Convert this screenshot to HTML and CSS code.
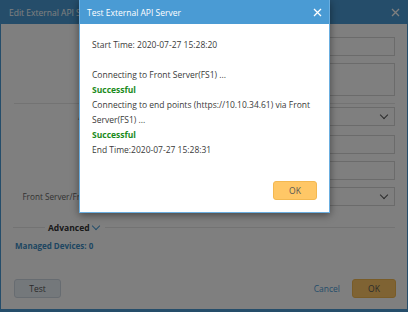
FILE: index.html
```
<!DOCTYPE html>
<html lang="en">
<head>
    <meta charset="UTF-8">
    <title>Test External API Server</title>
    <link rel="stylesheet" href="styles.css">
</head>
<body>
    <div class="dialog">
        <div class="dialog-header">
            <span class="dialog-title">Edit External API Server</span>
            <svg class="close" width="9" height="9" viewBox="0 0 9 9"><path d="M1 1L8 8M8 1L1 8" stroke="#fff" stroke-width="1.3"/></svg>
        </div>
        <div class="dialog-body">
            <div class="row">
                <label class="label">Name:</label>
                <div class="field"></div>
            </div>
            <div class="row row-tall">
                <label class="label">Description:</label>
                <div class="field field-area"></div>
            </div>
            <div class="separator"></div>
            <div class="row row-first">
                <label class="label">Authentication By:</label>
                <div class="field select"><span class="chev"></span></div>
            </div>
            <div class="row">
                <label class="label">Username:</label>
                <div class="field"></div>
            </div>
            <div class="row">
                <label class="label">Password:</label>
                <div class="field"></div>
            </div>
            <div class="row">
                <label class="label">Front Server/Front Server Group:</label>
                <div class="field select"><span class="chev"></span></div>
            </div>
            <div class="advanced">
                <span class="adv-line"></span>
                <span class="adv-text">Advanced</span>
                <span class="chev chev-blue"></span>
                <span class="adv-line adv-line-long"></span>
            </div>
            <div class="managed">Managed Devices: 0</div>
        </div>
        <div class="dialog-footer">
            <button class="btn btn-test">Test</button>
            <span class="spacer"></span>
            <a class="cancel">Cancel</a>
            <button class="btn btn-ok">OK</button>
        </div>
    </div>

    <div class="overlay"></div>

    <div class="modal">
        <div class="modal-header">
            <span class="modal-title">Test External API Server</span>
            <svg class="close" width="9" height="9" viewBox="0 0 9 9"><path d="M1 1L8 8M8 1L1 8" stroke="#fff" stroke-width="1.3"/></svg>
        </div>
        <div class="modal-body">
            <div class="line">Start Time: 2020-07-27 15:28:20</div>
            <div class="line">&nbsp;</div>
            <div class="line">Connecting to Front Server(FS1) ...</div>
            <div class="line ok-text">Successful</div>
            <div class="line">Connecting to end points (https://10.10.34.61) via Front Server(FS1) ...</div>
            <div class="line ok-text">Successful</div>
            <div class="line">End Time:2020-07-27 15:28:31</div>
        </div>
        <div class="modal-footer">
            <button class="btn btn-ok">OK</button>
        </div>
    </div>
</body>
</html>
```

FILE: styles.css
```
html, body {
    margin: 0;
    padding: 0;
}
body {
    width: 408px;
    height: 312px;
    overflow: hidden;
    position: relative;
    font-family: "Open Sans", Arial, sans-serif;
    font-size: 8px;
    color: #333;
    background: #fff;
}
.dialog {
    height: 312px;
    box-sizing: border-box;
    border: 1px solid #4a9bd4;
    border-top: none;
    border-bottom-width: 3px;
    display: flex;
    flex-direction: column;
    background: #fff;
}
.dialog-header {
    height: 24px;
    background: #4a9bd4;
    color: #fff;
    display: flex;
    align-items: center;
    justify-content: space-between;
    padding: 0 7px 0 8px;
    font-size: 8.5px;
}
.close {
    display: block;
}
.dialog-body {
    padding: 13px 12px 0 12px;
}
.row {
    display: flex;
    align-items: center;
    height: 19px;
    margin-bottom: 7px;
}
.row-tall {
    height: 33px;
    margin-bottom: 0;
}
.row-first {
    margin-bottom: 9px;
}
.label {
    width: 135px;
    flex: none;
    text-align: right;
    padding-right: 8px;
    white-space: nowrap;
    font-size: 8.2px;
    color: #666;
}
.field {
    flex: 1;
    height: 100%;
    box-sizing: border-box;
    border: 1px solid #d6d6d6;
    background: #fff;
    display: flex;
    align-items: center;
    justify-content: flex-end;
    padding-right: 7px;
}
.separator {
    height: 1px;
    background: #e6e6e6;
    margin: 7px 0 3px 1px;
}
.chev {
    width: 5px;
    height: 5px;
    border-right: 1px solid #555;
    border-bottom: 1px solid #555;
    transform: rotate(45deg);
    margin-top: -3px;
}
.chev-blue {
    border-color: #4a9bd4;
    margin: -3px 6px 0 3px;
}
.advanced {
    display: flex;
    align-items: center;
    margin-top: 15px;
    height: 12px;
}
.adv-line {
    width: 32px;
    height: 1px;
    background: #e6e6e6;
    margin-right: 3px;
}
.adv-line-long {
    flex: 1;
    margin-right: 0;
}
.adv-text {
    font-weight: bold;
    font-size: 8.5px;
    color: #333;
}
.managed {
    margin-top: 7px;
    margin-left: 2px;
    font-weight: bold;
    font-size: 8px;
    color: #3c8dc4;
}
.dialog-footer {
    margin-top: auto;
    display: flex;
    align-items: center;
    padding: 0 11px 11px 13px;
}
.spacer {
    flex: 1;
}
.btn {
    font-family: "Open Sans", Arial, sans-serif;
    font-size: 8.5px;
    height: 19px;
    border-radius: 3px;
    padding: 0;
    cursor: pointer;
}
.btn-test {
    width: 47px;
    background: #e9f0f7;
    border: 1px solid #cfd8e2;
    color: #555;
}
.btn-ok {
    width: 44px;
    background: #ffc766;
    border: 1px solid #f3b851;
    color: #555;
}
.cancel {
    color: #4a9bd4;
    font-size: 8.5px;
    margin-right: 12px;
}
.overlay {
    position: absolute;
    left: 0;
    top: 0;
    right: 0;
    bottom: 0;
    background: rgba(0, 0, 0, 0.5);
}
.modal {
    position: absolute;
    left: 79px;
    top: 0;
    width: 251px;
    height: 213px;
    box-sizing: border-box;
    border: 1px solid #6aaee0;
    border-top: none;
    background: #fff;
    box-shadow: 0 2px 8px rgba(0, 0, 0, 0.45);
    display: flex;
    flex-direction: column;
}
.modal-header {
    height: 24px;
    background: #4a9bd4;
    color: #fff;
    display: flex;
    align-items: center;
    justify-content: space-between;
    padding: 0 7px 0 7px;
    font-size: 8.5px;
}
.modal-body {
    padding: 13px 12px 0 12px;
}
.line {
    line-height: 15px;
    font-size: 8.5px;
    color: #3a3a3a;
}
.ok-text {
    color: #1b8b1b;
    font-weight: bold;
}
.modal-footer {
    margin-top: auto;
    display: flex;
    justify-content: flex-end;
    padding: 0 12px 12px 0;
}
```
